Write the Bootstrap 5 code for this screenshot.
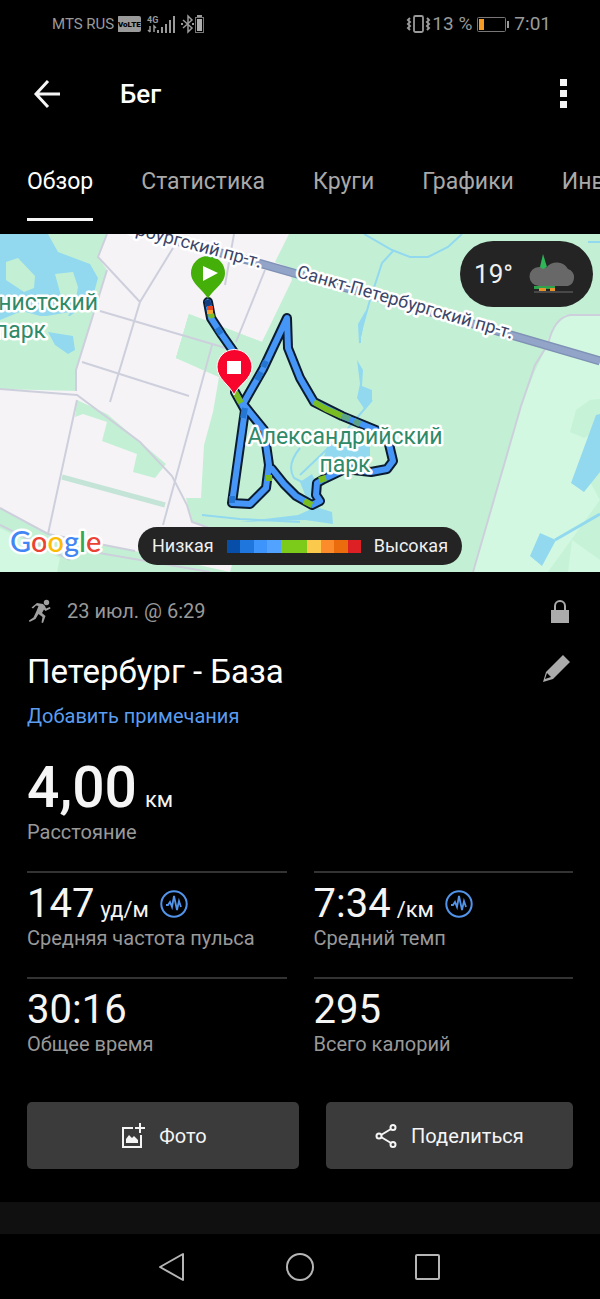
<!DOCTYPE html>
<html lang="ru" data-bs-theme="dark">
<head>
<meta charset="utf-8">
<meta name="viewport" content="width=device-width, initial-scale=1">
<title>Бег</title>
<link href="https://cdn.jsdelivr.net/npm/bootstrap@5.3.0/dist/css/bootstrap.min.css" rel="stylesheet">
<style>
  body { background: #000; color: #f5f5f5; font-family: Roboto, "Liberation Sans", sans-serif; font-size: 20px; line-height: 24px; overflow-x: hidden; }
  svg { display: block; flex: none; }
  .gutter { padding-left: 27px; padding-right: 27px; }
  .status { height: 48px; padding: 0 49px 0 52px; color: #9a9a9a; font-size: 19px; }
  .carrier { font-size: 15px; }
  .appbar { height: 92px; }
  .appbar h1 { font-size: 26px; line-height: 32px; font-weight: 500; margin-left: 60px; }
  .icon-btn { background: none; border: 0; padding: 0; color: inherit; }
  .tabs { height: 94px; padding-top: 26px; gap: 48px; overflow: hidden; font-size: 23px; }
  .tabs a { color: #a9a9a9; text-decoration: none; white-space: nowrap; line-height: 32px; height: 55px; border-bottom: 3px solid transparent; }
  .tabs a.active { color: #fff; border-color: #f5f5f5; }
  .map-svg { width: 100%; height: auto; }
  .chip { background: #242424; color: #f0f0f0; border-radius: 34px; }
  .weather { top: 7px; right: 7px; height: 66px; padding: 0 14px; gap: 16px; font-size: 26px; }
  .legend { bottom: 7px; height: 38px; padding: 0 14px; gap: 13px; font-size: 18px; white-space: nowrap; }
  .muted { color: #999; }
  .meta { padding-top: 24px; height: 54px; gap: 14px; }
  .title { font-size: 33px; line-height: 44px; font-weight: 400; }
  .note-row { padding-top: 10px; }
  .note { color: #5b9df0; text-decoration: none; }
  .distance { margin-top: 30px; gap: 8px; }
  .big { font-size: 57px; line-height: 60px; font-weight: 500; }
  .unit { font-size: 22px; line-height: 24px; }
  .stats { display: grid; grid-template-columns: 1fr 1fr; column-gap: 27px; margin-top: 27px; }
  .distance + .muted { padding-top: 2px; }
  .stat { border-top: 2px solid #333; padding: 9px 0 27px; }
  .value { font-size: 40px; line-height: 44px; }
  .stat .unit { margin: 0 10px 0 6px; }
  .actions { gap: 27px; margin-top: 19px; padding-bottom: 33px; }
  .action { background: #3b3b3b; color: #f5f5f5; border: 0; border-radius: 5px; height: 67px; font-size: 20px; gap: 14px; flex: 10 1 0; }
  .action.narrow { flex-grow: 9; }
  .strip { height: 32px; background: #101010; }
  .sysnav { height: 65px; gap: 100px; color: #b5b5b5; }
  .halo { paint-order: stroke; stroke: #fff; stroke-width: 5px; stroke-linejoin: round; }
</style>
</head>
<body>
<div class="status d-flex align-items-center justify-content-between">
  <div class="d-flex align-items-center">
    <span class="carrier">MTS RUS</span>
    <svg class="ms-1" width="88" height="20" viewBox="0 0 88 20" fill="#9a9a9a">
      <rect x="-1" y="2" width="24" height="16" rx="2"/>
      <text x="0" y="13" font-size="8" font-weight="900" fill="#000">VoLTE</text>
      <text x="29" y="9" font-size="9" font-weight="700">4G</text>
      <path d="M32 12v6m-2-2l2 2m4 0v-6l2 2" stroke="#9a9a9a" stroke-width="1.5" fill="none"/>
      <path d="M39 16h2v3h-2zM43 13h2v6h-2zM47 10h2v9h-2zM51 6h2v13h-2zM55 2h2v17h-2z"/>
      <path d="M65 6l9 8-4 4V2l4 4-9 8" fill="none" stroke="#9a9a9a" stroke-width="1.500"/>
      <path d="M63 9h2v2h-2zM74 9h2v2h-2z"/>
      <path d="M79 1h5v2h-5z"/><rect x="77.500" y="3.500" width="8" height="15" fill="none" stroke="#777"/><rect x="79" y="5" width="5" height="12" fill="#b0b0b0"/>
    </svg>
  </div>
  <div class="d-flex align-items-center">
    <svg width="26" height="20" viewBox="0 0 26 20" fill="none" stroke="#9a9a9a">
      <rect x="8" y="2" width="9" height="16" rx="1.500" stroke-width="1.800"/>
      <path d="M4 4l-2 2 2 2-2 2 2 2-2 2 2 2M21 4l2 2-2 2 2 2-2 2 2 2-2 2" stroke-width="2"/>
    </svg>
    <span>13 %</span>
    <svg class="mx-1" width="34" height="18" viewBox="0 0 34 18"><rect x="1.500" y="2.500" width="28" height="14" rx="1" fill="none" stroke="#777"/><rect x="3" y="4" width="5" height="11" fill="#f59a23"/><path d="M31 6h2v7h-2z" fill="#9a9a9a"/></svg>
    <span>7:01</span>
  </div>
</div>

<header class="appbar gutter d-flex align-items-center">
  <button class="icon-btn" aria-label="Назад"><svg width="33" height="30" viewBox="0 0 33 30" fill="none" stroke="#f5f5f5" stroke-width="3"><path d="M33 15H9M21 2L9 15l12 13"/></svg></button>
  <h1 class="mb-0">Бег</h1>
  <button class="icon-btn ms-auto" aria-label="Меню"><svg width="14" height="34" viewBox="0 0 14 34" fill="#f5f5f5"><path d="M1 2h7v7H1zM1 13h7v7H1zM1 24h7v7H1z"/></svg></button>
</header>

<nav class="tabs gutter d-flex">
  <a class="active" href="#">Обзор</a>
  <a href="#">Статистика</a>
  <a href="#">Круги</a>
  <a href="#">Графики</a>
  <a href="#">Инв</a>
</nav>

<section class="position-relative">
  <svg class="map-svg" viewBox="0 234 600 338">
    <rect y="234" width="600" height="338" fill="#c3f0d4"/>
    <!-- city blocks -->
    <path d="M107 234L98 257 107 270 76 370 77 391 0 389V508L48 534 135 551 230 572 240 535 192 522 186 498H201L204 445 213 412 219 377 176 358 189 314 262 342 300 272 289 234Z" fill="#f5f3f6"/>
    <path d="M77 400L107 414 166 464 155 478 133 472 137 454 102 441 107 422 83 414 75 417Z" fill="#c3f0d4"/>
    <path d="M62 477L165 505" stroke="#c3e4d6" stroke-width="5"/>
    <path d="M289 234L296 261 250 336 189 314 176 358 219 377 240 400 300 400V234Z" fill="#c3f0d4"/>
    <path d="M234 234H289L281 250 292 280 262 342 189 314 205 295Z" fill="#f5f3f6"/>
    <path d="M289 234H320V300L262 342 300 272 275 262Z" fill="#c3f0d4"/>
    <path d="M189 314L262 342 246 378 176 358Z" fill="#c3f0d4"/>
    <path d="M600 315H565Q550 325 545 350L535 371 521 406 472 572H600Z" fill="#d2f8e1"/>
    <path d="M576 410L590 400 600 399V560L572 540 568 572H548L600 500 589 480 598 430 584 438 570 432Z" fill="#c3f0d4" opacity=".8"/>
    <path d="M0 528L60 558 57 572H0Z" fill="#d2f8e1"/>
    <!-- water -->
    <path d="M0 234H48L58 252 90 264 98 278 92 300 70 316H40L22 311 0 320ZM48 332L73 336 75 350 68 354 55 345Z" fill="#92d9f0"/>
    <path d="M6 262L18 258 35 276 34 288 24 292 6 280ZM55 274L73 272 78 287 75 303 61 296Z" fill="#c3f0d4"/>
    <path d="M35 318L70 312 65 322 45 330Z" fill="#c3f0d4"/>
    <g fill="none" stroke="#92d9f0" stroke-width="2">
      <path d="M364 234L392 250 410 257H428L448 247 462 234M394 250L382 263 370 300 360 335V343M588 242H600"/>
      <path d="M372 400L345 432 300 475M300 448Q286 465 294 478L310 486M202 515L240 519 300 522"/>
      <path d="M555 540L600 514" stroke-width="3"/>
    </g>
    <path d="M358 324L366 310 362 334 359 344ZM357 360L363 370 362 386 372 390 372 400 365 410 357 398 360 384ZM329 440H370V456L348 472 320 470ZM300 482L312 474 320 490 309 505ZM298 515L316 507 332 512 333 524 305 520 240 522Z" fill="#92d9f0"/>
    <path d="M596 415L600 414V472L584 492 571 483ZM540 533L556 540 542 566 530 556Z" fill="#92d9f0"/>
    <!-- streets -->
    <g fill="none" stroke="#cdd0dc" stroke-width="2">
      <path d="M107 234L98 257 140 302M173 248L140 302 110 402M107 270L76 370V391M77 400L48 534M0 389L77 395 140 442 172 476 187 505 192 522 230 535"/>
      <path d="M100 311L236 351M82 362L189 396M234 234L225 285M212 345L163 525M265 270L236 342"/>
      <path d="M135 551L48 534 0 508M600 315H570Q554 318 548 344L535 365 521 406 473 572M70 548L210 572M0 525L70 560"/>
    </g>
    <path d="M150 234L262 264 480 326 600 361" fill="none" stroke="#7f91b5" stroke-width="9"/>
    <path d="M150 234L262 264 480 326 600 361" fill="none" stroke="#92a5c9" stroke-width="6"/>
    <!-- recorded track -->
    <g fill="none" stroke-linejoin="round" stroke-linecap="round">
      <path d="M208 302L211 318 222 335 236 355M235 392L245 410 232 503 250 504 266 488 269 465 264 430 243 404 263 369 287 318 288 348 300 378 314 402 342 416 376 430 388 440 393 461 387 469 371 472 345 469 324 479 317 483 316 495 320 501 312 505 296 496 284 484 272 469" stroke="#0c1c30" stroke-width="10"/>
      <path d="M208 302L211 318 222 335 236 355M235 392L245 410 232 503 250 504 266 488 269 465 264 430 243 404 263 369 287 318 288 348 300 378 314 402 342 416 376 430 388 440 393 461 387 469 371 472 345 469 324 479 317 483 316 495 320 501 312 505 296 496 284 484 272 469" stroke="#4596f7" stroke-width="6"/>
      <g stroke-width="6" stroke-linecap="butt">
        <path d="M207 300L209 306" stroke="#123d82"/><path d="M210 306V310" stroke="#e8461d"/><path d="M210 310V314" stroke="#f5a32c"/>
        <path d="M211 314L212 318M235 392L241 403M314 402L326 409 342 416M319 480L326 478M304 501L312 505M269 475V481" stroke="#79bd20"/>
        <path d="M217 328L221 334M257 380L261 372M263 367L266 361M245 408L243 418M232 496V503" stroke="#2476d2"/>
        <path d="M342 416L350 419M354 421L360 424" stroke="#5ba586"/>
      </g>
    </g>
    <!-- start and finish pins -->
    <path d="M208 299C204 290 191 284 191 273A17 17 0 0 1 225 273C225 284 212 290 208 299Z" fill="#43af08"/>
    <path d="M203 266L218 273 203 281Z" fill="#fff"/>
    <path d="M234 395C230 385 217 379 217 367A17.500 17.500 0 0 1 252 367C252 379 238 385 234 395Z" fill="#f8052d" stroke="#fff"/>
    <rect x="227" y="361" width="14" height="13" fill="#fff"/>
    <!-- labels -->
    <g font-size="23" fill="#2f8a68">
      <text class="halo" x="98" y="310" text-anchor="end">нистский</text>
      <text class="halo" x="46" y="338" text-anchor="end">парк</text>
      <text class="halo" x="345" y="444" text-anchor="middle">Александрийский</text>
      <text class="halo" x="345" y="472" text-anchor="middle">парк</text>
    </g>
    <g font-size="18" fill="#3b4669">
      <text class="halo" transform="translate(296 277) rotate(16)">Санкт-Петербургский пр-т.</text>
      <text class="halo" transform="translate(260 268) rotate(15)" text-anchor="end">ербургский пр-т.</text>
    </g>
    <text class="halo" x="10" y="552" font-family="Lato, sans-serif" font-size="29" font-weight="500"><tspan fill="#4285f4">G</tspan><tspan fill="#ea4335">o</tspan><tspan fill="#fbbc05">o</tspan><tspan fill="#4285f4">g</tspan><tspan fill="#34a853">l</tspan><tspan fill="#ea4335">e</tspan></text>
  </svg>
  <div class="weather chip position-absolute d-flex align-items-center">
    <span>19°</span>
    <svg width="50" height="42" viewBox="0 0 50 42"><path d="M5 33h21v3H5z" fill="#2fa34c"/><path d="M10 35h7v3h-7zM21 35h5v3h-5z" fill="#e8932a"/><path d="M10 33a9 9 0 0 1 0-19q4-1 7 1a13 13 0 0 1 22 1 9 9 0 0 1 0 17z" fill="#686868"/><path d="M14 1l4 13-4 2-3-2z" fill="#2fb457"/><path d="M5 39h39" stroke="#555" stroke-width="1.500"/></svg>
  </div>
  <div class="legend chip position-absolute start-50 translate-middle-x d-flex align-items-center">
    <span>Низкая</span>
    <svg width="134" height="13" viewBox="0 0 10 1" preserveAspectRatio="none" shape-rendering="crispEdges"><path fill="#074ea8" d="M0 0h1v1H0z"/><path fill="#1f76dc" d="M1 0h1v1H1z"/><path fill="#3d94fa" d="M2 0h1v1H2z"/><path fill="#52a2ff" d="M3 0h1v1H3z"/><path fill="#7ccb1a" d="M4 0h2v1H4z"/><path fill="#fbca4d" d="M6 0h1v1H6z"/><path fill="#fb8b2b" d="M7 0h1v1H7z"/><path fill="#ea6c0c" d="M8 0h1v1H8z"/><path fill="#dc2023" d="M9 0h1v1H9z"/></svg>
    <span>Высокая</span>
  </div>
</section>

<main class="gutter">
  <div class="meta muted d-flex align-items-center">
    <svg width="26" height="26" viewBox="0 0 26 26" fill="#a0a0a0"><circle cx="19.500" cy="4.500" r="2.700"/><path d="M10 5l6 1 2 2 1 2.500 4-1.500.5 1.500-5 2.500-1.500-1.500-2 3.500 3.500 3-2.500 7-1.500-.5 1-5.500-4-3-3 5-6 3-.5-1.500 4.500-3 3-6.500 2-5-2.500-.5-3 3-1.500-1z"/></svg>
    <span>23 июл. @ 6:29</span>
    <svg class="ms-auto me-1" width="18" height="24" viewBox="0 0 18 24"><path d="M0 11h18v13H0z" fill="#ababab"/><path d="M4 12V7a5 5 0 0 1 10 0v5" fill="none" stroke="#ababab" stroke-width="2"/></svg>
  </div>
  <div class="d-flex align-items-center justify-content-between pt-4">
    <h2 class="title mb-0">Петербург - База</h2>
    <button class="icon-btn" aria-label="Изменить название"><svg width="32" height="36" viewBox="0 0 32 36" fill="#ababab"><path fill-rule="evenodd" d="M22 1l7 7-17 17-10 3 3-10zM6 19l-2 6 6-2z"/></svg></button>
  </div>
  <div class="note-row"><a class="note" href="#">Добавить примечания</a></div>
  <div class="distance d-flex align-items-baseline"><span class="big">4,00</span><span class="unit">км</span></div>
  <div class="muted">Расстояние</div>

  <div class="stats">
    <div class="stat">
      <div class="d-flex align-items-baseline"><span class="value">147</span><span class="unit">уд/м</span>
        <svg class="align-self-center" width="30" height="30" viewBox="0 0 30 30" fill="none" stroke="#5294ea"><circle cx="15" cy="15" r="12.700" stroke-width="2"/><path d="M7 16h2l2-3 2 5 2-11 3 14 2-9 2 6" stroke-width="1.800"/></svg></div>
      <div class="muted">Средняя частота пульса</div>
    </div>
    <div class="stat">
      <div class="d-flex align-items-baseline"><span class="value">7:34</span><span class="unit">/км</span>
        <svg class="align-self-center" width="30" height="30" viewBox="0 0 30 30" fill="none" stroke="#5294ea"><circle cx="15" cy="15" r="12.700" stroke-width="2"/><path d="M7 16h2l2-3 2 5 2-11 3 14 2-9 2 6" stroke-width="1.800"/></svg></div>
      <div class="muted">Средний темп</div>
    </div>
    <div class="stat"><div class="value">30:16</div><div class="muted">Общее время</div></div>
    <div class="stat"><div class="value">295</div><div class="muted">Всего калорий</div></div>
  </div>

  <div class="actions d-flex">
    <button class="action btn d-flex align-items-center justify-content-center">
      <svg width="26" height="28" viewBox="0 0 26 28" fill="none" stroke="#f5f5f5" stroke-width="2"><path d="M14 6H4v19h18V13M21 1v10M16 6h10"/><path d="M7 21v-4l3-4 3 3 2-2 4 4v3z" fill="#f5f5f5" stroke="none"/></svg>
      Фото
    </button>
    <button class="action narrow btn d-flex align-items-center justify-content-center">
      <svg width="22" height="26" viewBox="0 0 22 26" fill="none" stroke="#f5f5f5" stroke-width="2"><path d="M6 12l10-6M6 14l10 6"/><circle cx="4" cy="13" r="2.500"/><circle cx="18" cy="4.500" r="2.500"/><circle cx="18" cy="21.500" r="2.500"/></svg>
      Поделиться
    </button>
  </div>
</main>
<div class="strip"></div>
<footer class="sysnav d-flex align-items-center justify-content-center">
  <button class="icon-btn" aria-label="Назад"><svg width="28" height="30" viewBox="0 0 28 30" fill="none" stroke="currentColor" stroke-width="2" stroke-linejoin="round"><path d="M25 2v26L2 15z"/></svg></button>
  <button class="icon-btn" aria-label="Домой"><svg width="28" height="30" viewBox="0 0 28 30" fill="none" stroke="currentColor" stroke-width="2"><circle cx="14" cy="15" r="13"/></svg></button>
  <button class="icon-btn" aria-label="Недавние"><svg width="28" height="30" viewBox="0 0 28 30" fill="none" stroke="currentColor" stroke-width="2"><rect x="2" y="3" width="23" height="24" rx="1"/></svg></button>
</footer>
<script src="https://cdn.jsdelivr.net/npm/bootstrap@5.3.0/dist/js/bootstrap.bundle.min.js"></script>
</body>
</html>
